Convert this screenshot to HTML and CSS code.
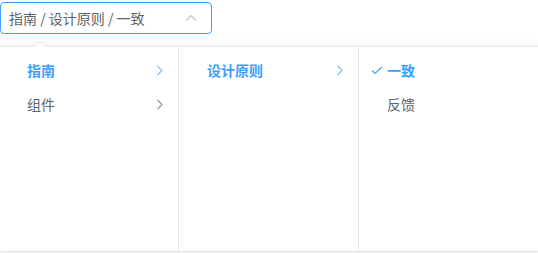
FILE: index.html
```html
<!DOCTYPE html>
<html lang="zh-CN">
<head>
  <meta charset="UTF-8" />
  <meta name="viewport" content="width=device-width, initial-scale=1.0"/>
  <title>Cascader</title>
  <link rel="stylesheet" href="styles.css">
</head>
<body>
  <div class="cascader">
    <span class="cascader-text">指南 / 设计原则 / 一致</span>
    <svg class="cascader-arrow" width="12" height="8" viewBox="0 0 12 8">
      <polyline points="1,6.5 6,1.5 11,6.5" fill="none" stroke="#c0c4cc" stroke-width="1.2"/>
    </svg>
  </div>

  <div class="dropdown">
    <div class="popper-arrow"></div>
    <div class="panel">
      <div class="menu">
        <ul class="menu-list">
          <li class="node active">
            <span class="node-label">指南</span>
            <svg class="node-postfix" width="8" height="11" viewBox="0 0 8 11"><polyline points="1.5,1 6,5.5 1.5,10" fill="none" stroke="currentColor" stroke-width="1.1"/></svg>
          </li>
          <li class="node">
            <span class="node-label">组件</span>
            <svg class="node-postfix" width="8" height="11" viewBox="0 0 8 11"><polyline points="1.5,1 6,5.5 1.5,10" fill="none" stroke="currentColor" stroke-width="1.1"/></svg>
          </li>
        </ul>
      </div>
      <div class="menu">
        <ul class="menu-list">
          <li class="node active">
            <span class="node-label">设计原则</span>
            <svg class="node-postfix" width="8" height="11" viewBox="0 0 8 11"><polyline points="1.5,1 6,5.5 1.5,10" fill="none" stroke="currentColor" stroke-width="1.1"/></svg>
          </li>
        </ul>
      </div>
      <div class="menu">
        <ul class="menu-list">
          <li class="node active">
            <svg class="node-check" width="12" height="9" viewBox="0 0 12 9"><polyline points="1,4.5 4,7.5 11,1" fill="none" stroke="currentColor" stroke-width="1.1"/></svg>
            <span class="node-label">一致</span>
          </li>
          <li class="node">
            <span class="node-label">反馈</span>
          </li>
        </ul>
      </div>
    </div>
  </div>
</body>
</html>
```

FILE: styles.css
```css
body {
  margin: 0;
  padding-top: 2px;
  font-family: "Noto Sans CJK SC", "Noto Sans", sans-serif;
  background: #fff;
  overflow: hidden;
  width: 538px;
  height: 253px;
}
.cascader {
  box-sizing: border-box;
  width: 212px;
  height: 32px;
  border: 1px solid #409eff;
  border-radius: 4px;
  display: flex;
  align-items: center;
  padding: 0 14px 0 8px;
  font-size: 14px;
  color: #606266;
}
.cascader-text {
  flex: 1;
  white-space: nowrap;
}
.cascader-arrow {
  display: block;
}
.dropdown {
  margin-top: 12px;
  margin-left: -2px;
  width: 542px;
  border: 1px solid #e4e7ed;
  border-radius: 4px;
  background: #fff;
  box-shadow: 0 2px 12px 0 rgba(0,0,0,0.1);
  position: relative;
}
.popper-arrow {
  position: absolute;
  top: -6px;
  left: 35px;
  width: 0;
  height: 0;
  border-left: 6px solid transparent;
  border-right: 6px solid transparent;
  border-bottom: 6px solid #e4e7ed;
}
.popper-arrow::after {
  content: "";
  position: absolute;
  top: 1px;
  left: -6px;
  border-left: 6px solid transparent;
  border-right: 6px solid transparent;
  border-bottom: 6px solid #fff;
}
.panel {
  display: flex;
}
.menu {
  box-sizing: border-box;
  width: 180px;
  height: 204px;
  border-right: 1px solid #e4e7ed;
}
.menu:last-child {
  border-right: none;
}
.menu-list {
  list-style: none;
  margin: 0;
  padding: 6px 0;
}
.node {
  position: relative;
  display: flex;
  align-items: center;
  height: 34px;
  padding: 0 30px 0 18px;
  font-size: 14px;
  color: #606266;
}
.node-label {
  flex: 1;
  padding: 0 10px;
  white-space: nowrap;
}
.node.active {
  color: #409eff;
  font-weight: bold;
}
.node-postfix {
  position: absolute;
  right: 14px;
  top: 12px;
  color: #909399;
}
.node.active .node-postfix {
  color: #79bbff;
}
.node-check {
  position: absolute;
  left: 12px;
  top: 13px;
  color: #409eff;
}
```
